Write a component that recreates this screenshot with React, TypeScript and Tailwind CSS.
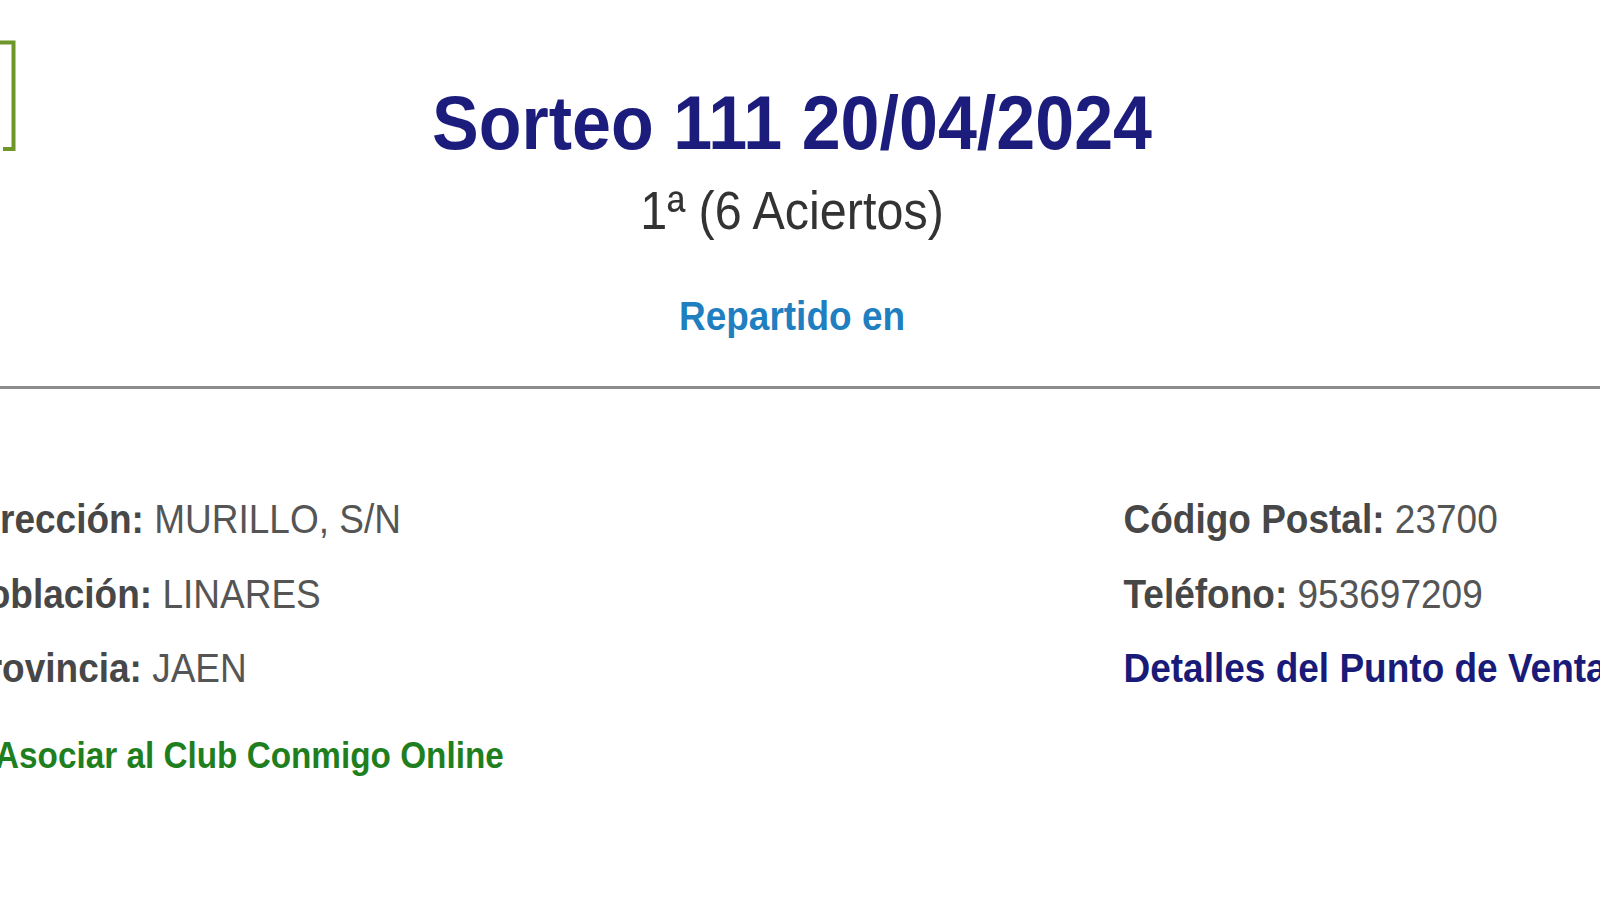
import React from "react";

function Row({ label, value }: { label: string; value: string }) {
  return (
    <div className="h-[44px] leading-[44px] text-[37px] whitespace-nowrap scale-y-110">
      <span className="font-bold text-[#474747]">{label}</span>{" "}
      <span className="text-[#555555]">{value}</span>
    </div>
  );
}

export default function App() {
  return (
    <div
      className="w-[1600px] h-[900px] overflow-hidden bg-white"
      style={{ fontFamily: '"Liberation Sans", Arial, sans-serif' }}
    >
      <div className="ml-[-37px] w-[1658px]">
        {/* Header */}
        <div className="grid grid-cols-[1fr_auto_1fr]">
          <div className="pt-[39px]">
            <svg width="53" height="113" viewBox="0 0 53 113" className="block">
              <path
                d="M0 3.5 H50.5 V110 H40"
                fill="none"
                stroke="#6e9628"
                strokeWidth="4"
              />
            </svg>
          </div>
          <div className="flex flex-col items-center pt-[87px]">
            <div className="h-[72px] leading-[72px] text-[70px] font-bold text-[#1b1c7c] whitespace-nowrap scale-y-[1.08]">
              Sorteo 111 20/04/2024
            </div>
            <div className="mt-[23px] h-[56px] leading-[56px] text-[48.5px] text-[#333333] whitespace-nowrap scale-y-110">
              1ª (6 Aciertos)
            </div>
            <div className="mt-[57px] h-[44px] leading-[44px] text-[37px] font-bold text-[#1f7fc0] whitespace-nowrap scale-y-110">
              Repartido en
            </div>
          </div>
          <div />
        </div>

        {/* Divider */}
        <div className="mt-[47px] h-[3px] bg-[#8c8c8c]" />

        {/* Details */}
        <div className="mt-[109px] grid grid-cols-[1160px_1fr]">
          <div className="flex flex-col gap-[30.5px]">
            <Row label="Dirección:" value="MURILLO, S/N" />
            <Row label="Población:" value="LINARES" />
            <Row label="Provincia:" value="JAEN" />
            <div className="mt-[14px] pl-[32px] h-[40px] leading-[40px] text-[33.3px] font-bold text-[#1f7f1f] whitespace-nowrap scale-y-110">
              Asociar al Club Conmigo Online
            </div>
          </div>
          <div className="flex flex-col gap-[30.5px] pl-[0.5px]">
            <Row label="Código Postal:" value="23700" />
            <Row label="Teléfono:" value="953697209" />
            <div className="h-[44px] leading-[44px] text-[37px] font-bold text-[#1a1a78] whitespace-nowrap scale-y-110">
              Detalles del Punto de Venta
            </div>
          </div>
        </div>
      </div>
    </div>
  );
}
